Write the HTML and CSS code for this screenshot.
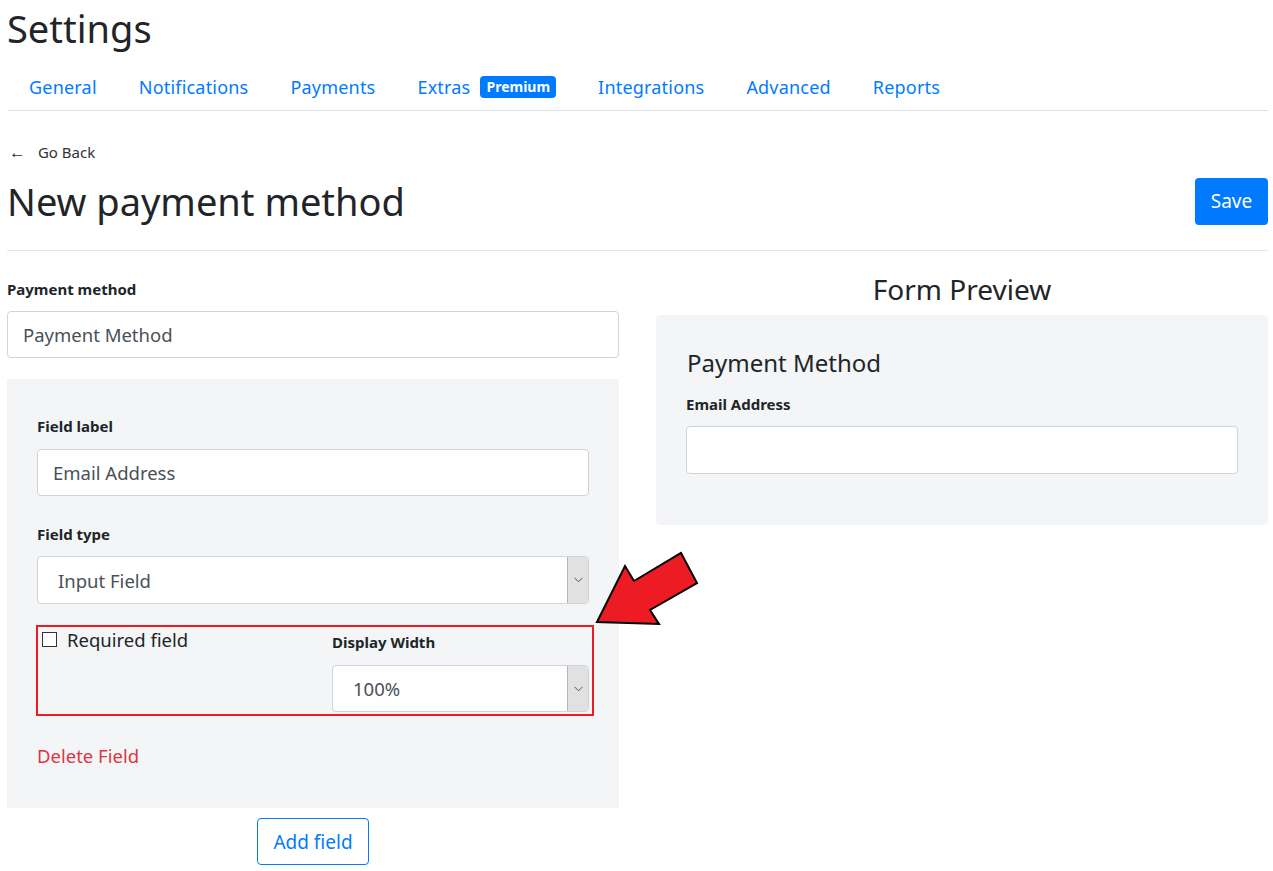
FILE: index.html
```html
<!DOCTYPE html>
<html lang="en">
<head>
<meta charset="utf-8">
<title>Settings</title>
<link rel="stylesheet" href="styles.css">
</head>
<body>
<div class="page">
  <h1 class="page-title">Settings</h1>
  <nav class="tabs">
    <a class="tab">General</a>
    <a class="tab">Notifications</a>
    <a class="tab">Payments</a>
    <a class="tab">Extras <span class="badge">Premium</span></a>
    <a class="tab">Integrations</a>
    <a class="tab">Advanced</a>
    <a class="tab">Reports</a>
  </nav>

  <a class="back"><span class="back-arrow">&larr;</span> Go Back</a>

  <div class="header-row">
    <h1 class="title">New payment method</h1>
    <button class="btn-save">Save</button>
  </div>
  <hr class="divider">

  <div class="columns">
    <div class="col">
      <label class="label">Payment method</label>
      <div class="input">Payment Method</div>

      <div class="panel">
        <label class="label">Field label</label>
        <div class="input">Email Address</div>

        <label class="label label-gap">Field type</label>
        <div class="select">
          <span class="select-text">Input Field</span>
          <span class="select-btn"><svg width="9" height="6" viewBox="0 0 9 6"><path d="M0.5 0.8 L4.5 4.8 L8.5 0.8" fill="none" stroke="#555" stroke-width="1"/></svg></span>
        </div>

        <div class="options">
          <div class="opt-left">
            <span class="checkbox"></span>
            <span class="check-label">Required field</span>
          </div>
          <div class="opt-right">
            <label class="label">Display Width</label>
            <div class="select">
              <span class="select-text">100%</span>
              <span class="select-btn"><svg width="9" height="6" viewBox="0 0 9 6"><path d="M0.5 0.8 L4.5 4.8 L8.5 0.8" fill="none" stroke="#555" stroke-width="1"/></svg></span>
            </div>
          </div>
        </div>

        <a class="delete">Delete Field</a>
      </div>

      <div class="add-row">
        <button class="btn-outline">Add field</button>
      </div>
    </div>

    <div class="col">
      <h2 class="preview-title">Form Preview</h2>
      <div class="preview">
        <h3 class="preview-name">Payment Method</h3>
        <label class="label">Email Address</label>
        <div class="input input-empty"></div>
      </div>
    </div>
  </div>

  <svg class="arrow" width="110" height="80" viewBox="590 548 110 80">
    <polygon points="597,622 625,566 634,581 681,553 697,583 650,610 659,624" fill="#ed1c24" stroke="#000" stroke-width="2" stroke-linejoin="miter"/>
  </svg>
</div>
</body>
</html>
```

FILE: styles.css
```css
* { box-sizing: border-box; }
html, body { margin: 0; padding: 0; background: #fff; }
body {
  font-family: "Segoe UI", "Noto Sans", "Open Sans", sans-serif;
  color: #212529;
  font-size: 16px;
}
.page {
  position: relative;
  padding: 0 5px 0 7px;
  width: 1273px;
}
.page-title {
  font-size: 38px;
  font-weight: 400;
  margin: 0;
  padding-top: 4px;
  line-height: 48px;
}
.tabs {
  display: flex;
  margin-top: 14px;
  border-bottom: 1px solid #dee2e6;
  height: 45px;
  align-items: center;
  margin-left: 1px;
}
.tab {
  color: #007bff;
  font-size: 18px;
  letter-spacing: 0.2px;
  padding: 0 21px;
  display: flex;
  align-items: center;
  gap: 10px;
  position: relative;
  top: -1px;
}
.badge {
  background: #007bff;
  color: #fff;
  font-size: 14px;
  font-weight: 700;
  letter-spacing: 0;
  padding: 2px 6px 2px;
  border-radius: 4px;
  line-height: 18px;
}
.back {
  display: block;
  margin-top: 31px;
  font-size: 15px;
  color: #333;
  line-height: 20px;
}
.back-arrow { display: inline-block; margin: 0 8px 0 2px; font-size: 17px; line-height: 14px; }
.header-row {
  display: flex;
  justify-content: space-between;
  align-items: center;
  margin-top: 11px;
}
.title {
  font-size: 38px;
  font-weight: 400;
  margin: 0;
  line-height: 56px;
}
.btn-save {
  background: #007bff;
  border: none;
  color: #fff;
  font: inherit;
  font-size: 19px;
  border-radius: 4px;
  width: 73px;
  height: 47px;
}
.divider {
  border: 0;
  border-top: 1px solid #e5e5e5;
  margin: 21px 0 0;
}
.columns {
  display: grid;
  grid-template-columns: 612px 612px;
  column-gap: 37px;
  margin-top: 28px;
}
.label {
  display: block;
  font-weight: 700;
  font-size: 15px;
  line-height: 20px;
}
.input {
  margin-top: 12px;
  height: 47px;
  border: 1px solid #ced4da;
  border-radius: 4px;
  background: #fff;
  padding: 0 15px;
  display: flex;
  align-items: center;
  font-size: 18.5px;
  color: #495057;
}
.panel {
  margin-top: 21px;
  background: #f4f5f7;
  padding: 37px 30px 40px;
}
.panel > .input { margin-top: 13px; }
.label-gap { margin-top: 28px; }
.select {
  margin-top: 12px;
  height: 48px;
  border: 1px solid #ced4da;
  border-radius: 4px;
  background: #fff;
  display: flex;
  align-items: stretch;
  font-size: 18.5px;
  color: #495057;
  overflow: hidden;
}
.select-text {
  flex: 1;
  display: flex;
  align-items: center;
  padding-left: 20px;
}
.select-btn {
  width: 21px;
  background: #e1e1e1;
  border-left: 1px solid #b5b5b5;
  display: flex;
  align-items: center;
  justify-content: center;
}
.options {
  margin-top: 21px;
  margin-left: -1px;
  margin-right: -5px;
  border: 2px solid #ed1c24;
  display: grid;
  grid-template-columns: 1fr 257px;
  column-gap: 22px;
  padding: 1px 3px 3px 4px;
  height: 91px;
}
.opt-left { display: flex; align-items: flex-start; }
.checkbox {
  width: 15px;
  height: 15px;
  border: 1px solid #333;
  background: #fff;
  margin-top: 4px;
  flex: none;
}
.check-label {
  font-size: 18.5px;
  margin-left: 10px;
  line-height: 24px;
}
.opt-right { padding-top: 4px; }
.opt-right .select { margin-top: 13px; height: 47px; }
.delete {
  display: block;
  color: #dc3545;
  font-size: 18.5px;
  margin-top: 28px;
  line-height: 24px;
}
.add-row {
  display: flex;
  justify-content: center;
  margin-top: 10px;
}
.btn-outline {
  background: #fff;
  border: 1px solid #007bff;
  color: #007bff;
  border-radius: 4px;
  font: inherit;
  font-size: 19px;
  width: 112px;
  height: 47px;
}
.preview-title {
  text-align: center;
  font-weight: 400;
  font-size: 28px;
  margin: -10px 0 0;
  line-height: 40px;
}
.preview {
  margin-top: 6px;
  background: #f4f5f7;
  border-radius: 4px;
  padding: 32px 30px 51px;
}
.preview-name {
  font-weight: 400;
  font-size: 24px;
  margin: 0 0 15px 1px;
  line-height: 32px;
}
.input-empty { margin-top: 12px; height: 48px; }
.arrow {
  position: absolute;
  left: 590px;
  top: 548px;
}
```
